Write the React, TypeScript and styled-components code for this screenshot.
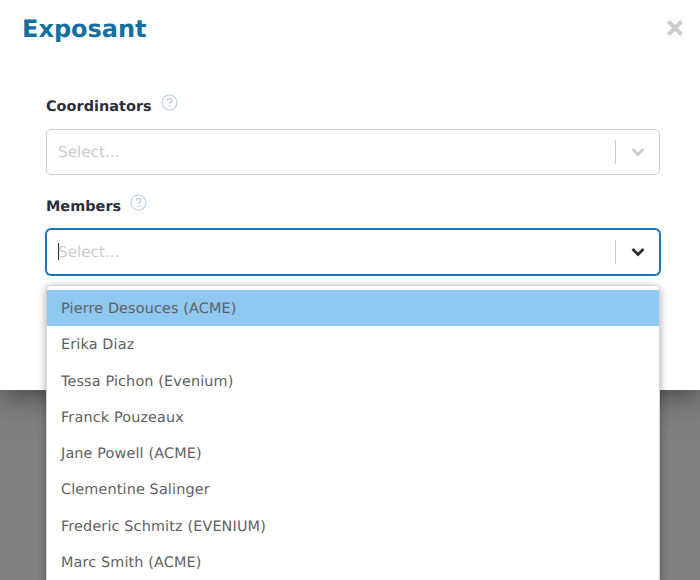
import styled, { createGlobalStyle } from "styled-components";

const OPTIONS = [
    "Pierre Desouces (ACME)",
    "Erika Diaz",
    "Tessa Pichon (Evenium)",
    "Franck Pouzeaux",
    "Jane Powell (ACME)",
    "Clementine Salinger",
    "Frederic Schmitz (EVENIUM)",
    "Marc Smith (ACME)"
];

const GlobalStyle = createGlobalStyle`
    html, body {
        margin: 0;
        height: 100%;
        overflow: hidden;
        background: #808080;
        font-family: "DejaVu Sans", Verdana, sans-serif;
        text-rendering: geometricPrecision;
    }
`;

const Page = styled.div`
    width: 700px;
    height: 580px;
    overflow: hidden;
    background: #808080;
`;

const Modal = styled.div`
    box-sizing: border-box;
    height: 390px;
    padding: 14px 16px 0 22px;
    background: #fff;
    box-shadow: 0 5px 30px rgba(0, 0, 0, 0.5);
`;

const Header = styled.header`
    display: flex;
    justify-content: space-between;
    align-items: flex-start;
    height: 70px;
`;

const Title = styled.h1`
    margin: 0;
    font-size: 24px;
    line-height: 30px;
    font-weight: 700;
    color: #11709f;
`;

const Close = styled.svg`
    width: 18px;
    height: 18px;
    margin-top: 5px;
`;

const Body = styled.div`
    width: 614px;
    margin-left: 24px;
`;

const Field = styled.div`
    position: relative;
    margin-bottom: 9px;
`;

const LabelRow = styled.div`
    display: flex;
    align-items: flex-start;
    gap: 9px;
    height: 45px;
`;

const Label = styled.label`
    font-size: 14.4px;
    line-height: 17px;
    padding-top: 15px;
    font-weight: 700;
    letter-spacing: 0.05px;
    color: #2a2e38;
`;

const Help = styled.svg`
    width: 17px;
    height: 17px;
    margin-top: 10px;
`;

const Control = styled.div<{ $focused?: boolean }>`
    box-sizing: border-box;
    display: flex;
    align-items: center;
    height: 46px;
    padding-left: 11px;
    border: 1px solid ${(p) => (p.$focused ? "#1a75b5" : "#ccc")};
    border-radius: 5px;
    background: #fff;
    box-shadow: ${(p) => (p.$focused ? "0 0 0 1px #1a75b5" : "none")};
`;

const Value = styled.div`
    flex: 1;
    font-size: 15.2px;
    color: #ccc;
`;

const Caret = styled.span`
    display: inline-block;
    width: 1px;
    height: 17px;
    margin-right: -1px;
    vertical-align: -3px;
    background: #2a2e38;
`;

const Separator = styled.span`
    width: 1px;
    height: 24px;
    background: #ccc;
`;

const Arrow = styled.svg`
    width: 43px;
    height: 16px;
`;

const Menu = styled.ul`
    position: absolute;
    top: 101px;
    left: 0;
    right: 0;
    margin: 0;
    padding: 4px 0;
    list-style: none;
    border: 1px solid #d4d4d4;
    border-radius: 5px;
    background: #fff;
    box-shadow: 0 2px 8px rgba(0, 0, 0, 0.35);
`;

const Option = styled.li<{ $active?: boolean }>`
    height: 36.25px;
    padding-left: 14px;
    font-size: 14.4px;
    line-height: 38.5px;
    letter-spacing: 0.14px;
    color: #5f5f5f;
    background: ${(p) => (p.$active ? "#8fc8f0" : "transparent")};
`;

const HelpIcon = () => (
    <Help viewBox="0 0 17 17" fill="none">
        <circle cx="8.5" cy="8.5" r="7.5" stroke="#b9d3e8" strokeWidth="1.2" />
        <path
            d="M6.2 6.6c.1-1.4 1.1-2.1 2.4-2.1 1.3 0 2.3.8 2.3 1.9 0 1.7-2.3 1.7-2.3 3.6"
            stroke="#a9c9e2"
            strokeWidth="1.2"
        />
        <circle cx="8.6" cy="12.3" r="0.8" fill="#a9c9e2" />
    </Help>
);

const ArrowIcon = ({ color }: { color: string }) => (
    <Arrow viewBox="0 0 43 16" fill="none">
        <path d="M16.5 5l5.5 5.5L27.5 5" stroke={color} strokeWidth="2.8" />
    </Arrow>
);

const App = () => (
    <Page>
        <GlobalStyle />
        <Modal>
            <Header>
                <Title>Exposant</Title>
                <Close viewBox="0 0 18 18" fill="none">
                    <path d="M2.5 2.5l13 13M15.5 2.5l-13 13" stroke="#ccc" strokeWidth="4" />
                </Close>
            </Header>
            <Body>
                <Field>
                    <LabelRow>
                        <Label>Coordinators</Label>
                        <HelpIcon />
                    </LabelRow>
                    <Control>
                        <Value>Select...</Value>
                        <Separator />
                        <ArrowIcon color="#ccc" />
                    </Control>
                </Field>
                <Field>
                    <LabelRow>
                        <Label>Members</Label>
                        <HelpIcon />
                    </LabelRow>
                    <Control $focused>
                        <Value>
                            <Caret />
                            Select...
                        </Value>
                        <Separator />
                        <ArrowIcon color="#2a2e38" />
                    </Control>
                    <Menu>
                        {OPTIONS.map((name, i) => (
                            <Option key={name} $active={i === 0}>
                                {name}
                            </Option>
                        ))}
                    </Menu>
                </Field>
            </Body>
        </Modal>
    </Page>
);

export default App;
